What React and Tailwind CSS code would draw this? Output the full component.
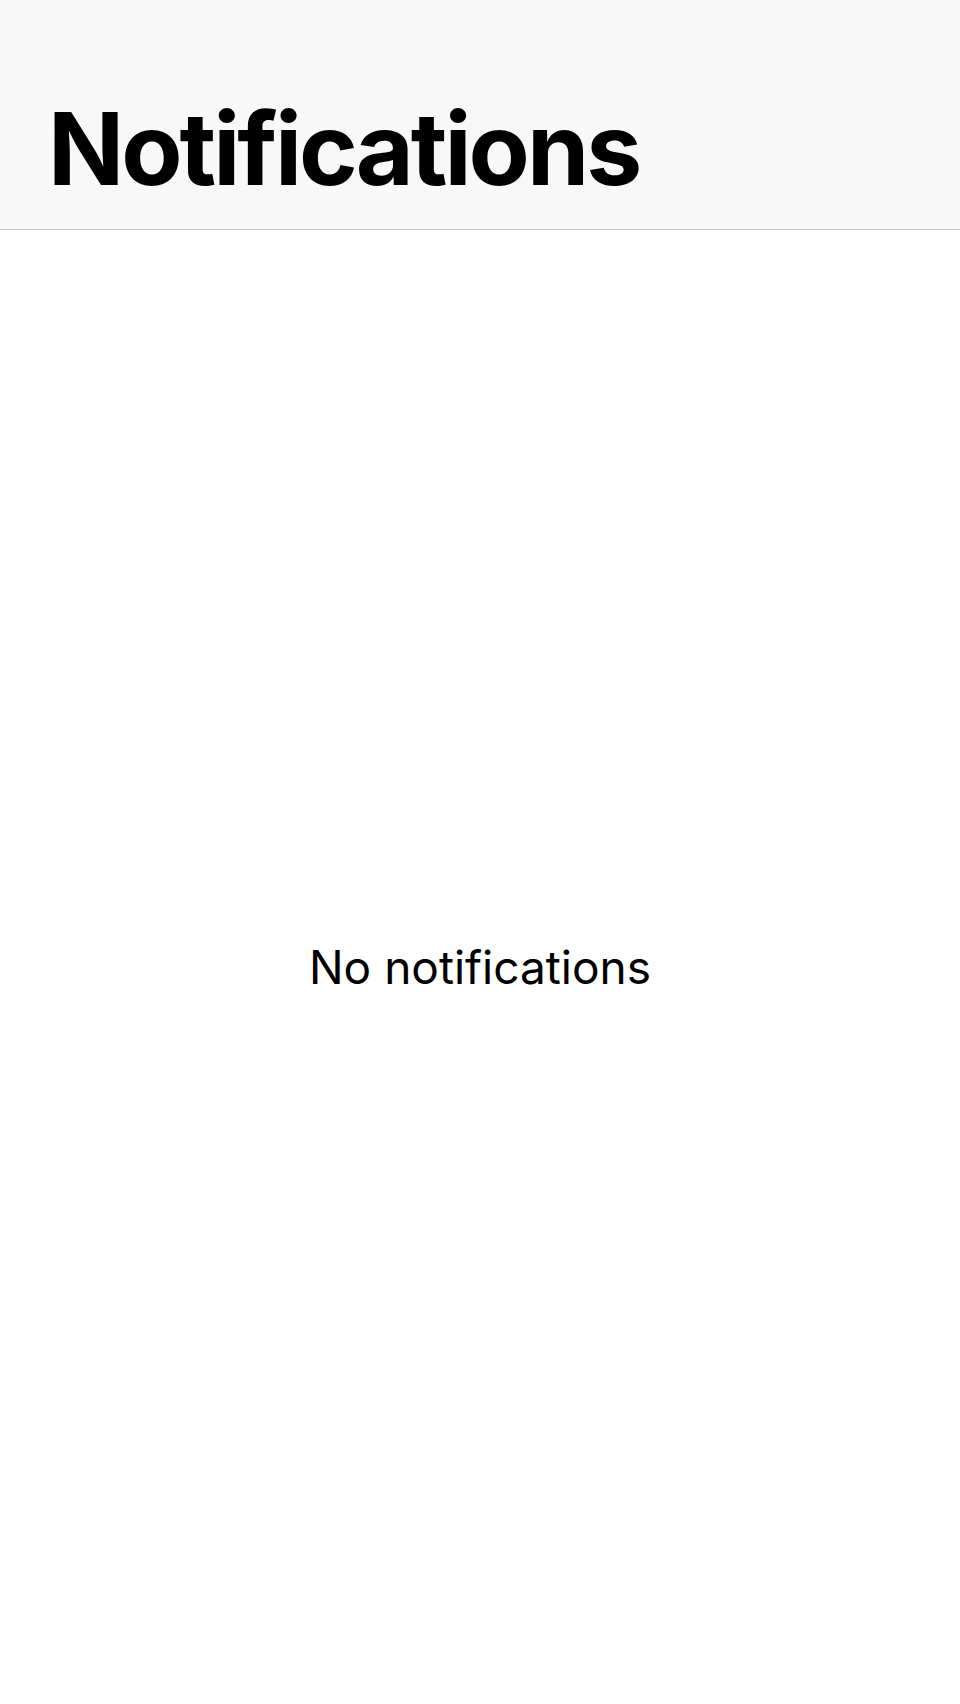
export default function App() {
  return (
    <div className="flex flex-col h-[1704px] bg-white" style={{ fontFamily: 'Inter, "Liberation Sans", Arial, sans-serif' }}>
      <header className="h-[230px] shrink-0 bg-[#f8f8f8] border-b border-[#c8c8c7] flex items-end pl-[48px] pb-[30px]">
        <h1 className="text-[100px] leading-none font-bold text-black tracking-[-3px]">Notifications</h1>
      </header>
      <main className="flex-1 flex items-center justify-center">
        <p className="text-[46px] leading-none text-black">No notifications</p>
      </main>
    </div>
  );
}
